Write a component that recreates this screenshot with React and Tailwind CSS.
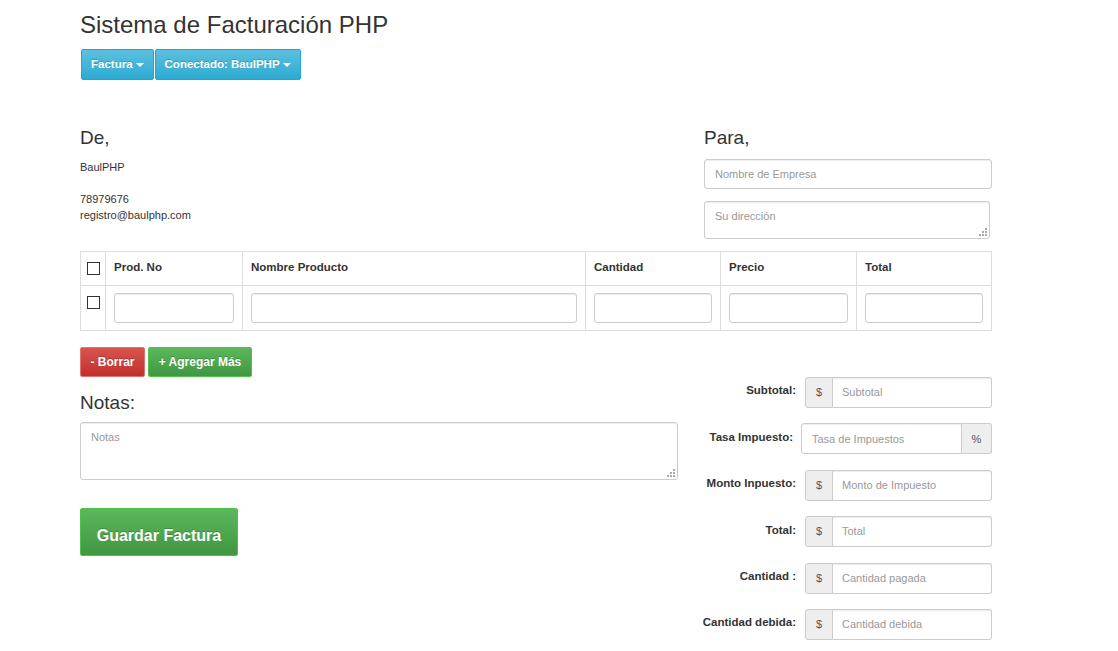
import { useState } from 'react'

const inputCls =
  'w-full h-[30px] border border-[#ccc] rounded-[3px] bg-white px-[10px] text-[11px] text-[#555] placeholder:text-[#999] shadow-[inset_0_1px_1px_rgba(0,0,0,0.075)] outline-none'

function Caret() {
  return <span className="inline-block ml-[3px] align-middle w-0 h-0 border-t-[4px] border-t-white border-x-[4px] border-x-transparent" />
}

function Check() {
  return <input type="checkbox" className="appearance-none w-[13px] h-[13px] border border-[#333] bg-white block" />
}

// dotted resize grip like older chrome
function Grip() {
  return (
    <svg className="absolute right-[3px] bottom-[3px] pointer-events-none" width="8" height="8" viewBox="0 0 8 8">
      <g fill="#aaa">
        <rect x="6" y="0" width="2" height="2" />
        <rect x="3" y="3" width="2" height="2" />
        <rect x="6" y="3" width="2" height="2" />
        <rect x="0" y="6" width="2" height="2" />
        <rect x="3" y="6" width="2" height="2" />
        <rect x="6" y="6" width="2" height="2" />
      </g>
    </svg>
  )
}

function MoneyRow({ label, placeholder }) {
  return (
    <div className="flex items-center justify-end h-[31px]">
      <label className="mb-[3px] text-[11.5px] font-bold text-[#333]">{label}</label>
      <div className="ml-[9px] w-[187px] h-[31px] flex">
        <span className="w-[28px] flex items-center justify-center bg-[#eee] border border-[#ccc] rounded-l-[3px] text-[11px] text-[#555]">$</span>
        <input placeholder={placeholder} className="flex-1 min-w-0 border border-l-0 border-[#ccc] rounded-r-[3px] px-[9px] text-[11px] text-[#555] placeholder:text-[#999] shadow-[inset_0_1px_1px_rgba(0,0,0,0.075)] outline-none" />
      </div>
    </div>
  )
}

export default function App() {
  const [rows] = useState([1])
  const cols = ['Prod. No', 'Nombre Producto', 'Cantidad', 'Precio', 'Total']
  const widths = ['w-[137px]', 'w-[343px]', 'w-[135px]', 'w-[136px]', 'w-[135px]']

  return (
    <div className="min-h-screen bg-white font-['Liberation_Sans',Arial,sans-serif] text-[#333]">
      <div className="ml-[80px] w-[912px] pb-[12px]">
        {/* Header */}
        <h1 className="pt-[12px] text-[24px] leading-[26px] text-[#333]">Sistema de Facturación PHP</h1>
        <div className="mt-[11px] flex gap-[1px] pl-[1px]">
          <button className="h-[31px] px-[9px] text-[11.5px] font-bold text-white bg-gradient-to-b from-[#5bc0de] to-[#2aabd2] border border-[#28a4c9] rounded-[2px] [text-shadow:0_-1px_0_rgba(0,0,0,0.2)]">
            Factura<Caret />
          </button>
          <button className="h-[31px] px-[9px] text-[11.5px] font-bold text-white bg-gradient-to-b from-[#5bc0de] to-[#2aabd2] border border-[#28a4c9] rounded-[2px] [text-shadow:0_-1px_0_rgba(0,0,0,0.2)]">
            Conectado: BaulPHP<Caret />
          </button>
        </div>

        {/* De / Para */}
        <div className="mt-[47px] flex justify-between">
          <div>
            <h3 className="text-[19px] leading-[21px]">De,</h3>
            <div className="mt-[11px] text-[11px] leading-[16px]">
              <div>BaulPHP</div>
              <div className="h-[16px]" />
              <div>78979676</div>
              <div>registro@baulphp.com</div>
            </div>
          </div>
          <div className="w-[288px]">
            <h3 className="text-[19px] leading-[21px]">Para,</h3>
            <input placeholder="Nombre de Empresa" className={inputCls + ' mt-[11px]'} />
            <div className="relative mt-[12px] w-[286px]">
              <textarea placeholder="Su dirección" className="w-[286px] h-[38px] block resize-none border border-[#ccc] rounded-[3px] px-[10px] pt-[6px] text-[11px] placeholder:text-[#999] shadow-[inset_0_1px_1px_rgba(0,0,0,0.075)] outline-none" />
              <Grip />
            </div>
          </div>
        </div>

        {/* Items table */}
        <table className="mt-[12px] w-[911px] border-collapse table-fixed">
          <thead>
            <tr className="h-[34px]">
              <th className="w-[25px] border border-[#ddd] px-[6px]"><Check /></th>
              {cols.map((c, i) => (
                <th key={c} className={`${widths[i]} border border-[#ddd] px-[8px] pb-[2px] text-left text-[11.5px] font-bold text-[#333]`}>{c}</th>
              ))}
            </tr>
          </thead>
          <tbody>
            {rows.map(r => (
              <tr key={r} className="h-[45px]">
                <td className="border border-[#ddd] px-[6px] align-top pt-[10px]"><Check /></td>
                {cols.map(c => (
                  <td key={c} className="border border-[#ddd] px-[8px] align-top pt-[7px]">
                    <input className={inputCls} />
                  </td>
                ))}
              </tr>
            ))}
          </tbody>
        </table>

        {/* Bottom */}
        <div className="mt-[16px] flex justify-between">
          <div className="w-[598px]">
            <div className="flex gap-[3px]">
              <button className="h-[30px] w-[65px] text-[12px] font-bold text-white bg-gradient-to-b from-[#d9534f] to-[#c12e2a] border border-[#e0736f] rounded-[2px] [text-shadow:0_-1px_0_rgba(0,0,0,0.2)]">- Borrar</button>
              <button className="h-[30px] w-[104px] text-[12px] font-bold text-white bg-gradient-to-b from-[#5cb85c] to-[#419641] border border-[#4cc44c] rounded-[2px] [text-shadow:0_-1px_0_rgba(0,0,0,0.2)]">+ Agregar Más</button>
            </div>
            <h3 className="mt-[15px] text-[19px] leading-[21px]">Notas:</h3>
            <div className="relative mt-[9px] w-[598px]">
              <textarea placeholder="Notas" className="block w-[598px] h-[58px] resize-none border border-[#ccc] rounded-[3px] px-[10px] pt-[6px] text-[11px] placeholder:text-[#999] shadow-[inset_0_1px_1px_rgba(0,0,0,0.075)] outline-none" />
              <Grip />
            </div>
            <button className="mt-[28px] h-[48px] w-[158px] pt-[7px] text-[16px] font-bold text-white bg-gradient-to-b from-[#5cb85c] to-[#419641] border border-[#4cc44c] rounded-[2px] [text-shadow:0_-1px_0_rgba(0,0,0,0.2)]">Guardar Factura</button>
          </div>

          <div className="pt-[30px] flex flex-col gap-[15.4px]">
            <MoneyRow label="Subtotal:" placeholder="Subtotal" />
            <div className="flex items-center justify-end h-[31px]">
              <label className="mb-[3px] text-[11.5px] font-bold text-[#333]">Tasa Impuesto:</label>
              <div className="ml-[8px] w-[191px] h-[31px] flex">
                <input placeholder="Tasa de Impuestos" className="flex-1 min-w-0 border border-[#ccc] rounded-l-[3px] px-[10px] text-[11px] placeholder:text-[#999] shadow-[inset_0_1px_1px_rgba(0,0,0,0.075)] outline-none" />
                <span className="w-[30px] flex items-center justify-center bg-[#eee] border border-l-0 border-[#ccc] rounded-r-[3px] text-[11px] text-[#555]">%</span>
              </div>
            </div>
            <MoneyRow label="Monto Inpuesto:" placeholder="Monto de Impuesto" />
            <MoneyRow label="Total:" placeholder="Total" />
            <MoneyRow label="Cantidad :" placeholder="Cantidad pagada" />
            <MoneyRow label="Cantidad debida:" placeholder="Cantidad debida" />
          </div>
        </div>
      </div>
    </div>
  )
}
